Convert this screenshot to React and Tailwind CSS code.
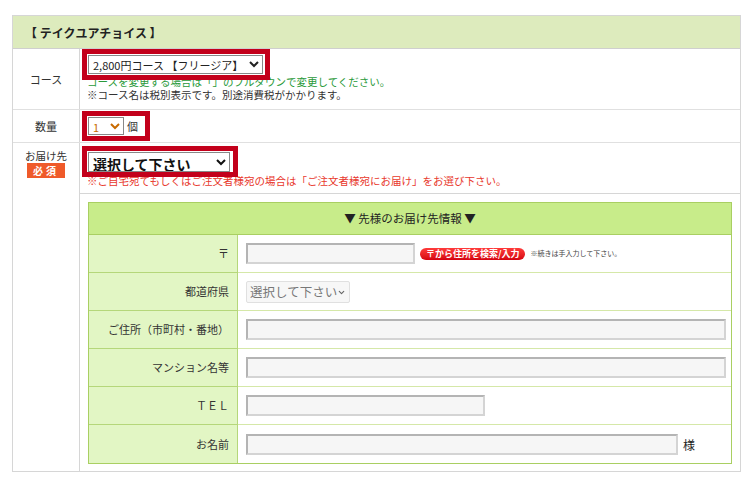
import React from "react";
import { ChevronDown } from "lucide-react";

const font = { fontFamily: '"Noto Sans CJK JP", "Noto Sans", sans-serif' };

// 入力欄の共通スタイル
const inputCls =
  "block h-[21px] bg-[#f6f6f6] border-2 border-t-[#b4b4b4] border-l-[#b4b4b4] border-b-[#d4d4d4] border-r-[#d4d4d4] outline-none";

// 赤枠（ハイライト）
const redBox = "outline-[5px] outline-solid outline-[#c3001b]";

function Row({ label, children, last }) {
  return (
    <div className={`grid grid-cols-[149px_1fr] h-[38px] ${last ? "" : "border-b border-[#d5e8a8]"}`}>
      <div className={`bg-[#e2f6c4] border-r border-[#b5d77a] flex items-center justify-end pr-[8px] text-[11px] leading-[13px] text-[#333] ${last ? "" : "border-b border-b-[#b5d77a] -mb-px"}`}>
        {label}
      </div>
      <div className="flex items-center pl-[8px] gap-[5px]">{children}</div>
    </div>
  );
}

export default function App() {
  return (
    <div className="w-[750px] h-[480px] bg-white pt-[15px] pl-[12px] leading-[13px]" style={font}>
      <div className="w-[729px] border border-[#d6d6d6]">
        {/* ヘッダー */}
        <div className="h-[33px] bg-[#ddebbd] border-b border-[#cfcfcf] flex items-center pl-[12px] text-[12px] font-bold text-[#222]">
          【 テイクユアチョイス 】
        </div>

        {/* コース */}
        <div className="grid grid-cols-[67px_1fr] h-[61px] border-b border-[#e0e0e0]">
          <div className="border-r border-[#d6d6d6] flex items-center justify-center text-[11px] text-[#333]">コース</div>
          <div className="pl-[7px] pt-[5px]">
            <div className={`w-[178px] h-[21px] p-px ${redBox}`}>
              <select className="block w-[175px] h-[19px] bg-white border border-[#888] text-[11px] leading-[13px] text-[#222]">
                <option>2,800円コース 【フリージア】</option>
              </select>
            </div>
            <div className="text-[10.5px] leading-[13px] text-[#2a9a3a]">
              コースを変更する場合は「」のプルダウンで変更してください。
            </div>
            <div className="text-[10.5px] leading-[13px] text-[#333]">
              ※コース名は税別表示です。別途消費税がかかります。
            </div>
          </div>
        </div>

        {/* 数量 */}
        <div className="grid grid-cols-[67px_1fr] h-[33px] border-b border-[#e0e0e0]">
          <div className="border-r border-[#d6d6d6] flex items-center justify-center text-[11px] text-[#333]">数量</div>
          <div className="flex items-center pl-[7px]">
            <div className={`w-[58px] h-[20px] flex items-center gap-[3px] pl-px ${redBox} text-[11px] text-[#333]`}>
              <select className="block w-[36px] h-[18px] bg-white border border-[#888] text-[11px] leading-[13px] text-[#c86a00]">
                <option>1</option>
              </select>
              個
            </div>
          </div>
        </div>

        {/* お届け先 */}
        <div className="grid grid-cols-[67px_1fr]">
          <div className="border-r border-[#d6d6d6] flex flex-col items-center pt-[7px]">
            <div className="text-[10.5px] leading-[12px] text-[#333]">お届け先</div>
            <div className="mt-[1px] w-[38px] h-[15px] bg-[#ef5a2a] text-white text-[10px] font-bold flex items-center justify-center tracking-[3px]">
              必須
            </div>
          </div>
          <div>
            <div className="h-[51px] pl-[7px] pt-[8px] border-b border-[#d6d6d6]">
              <div className={`w-[146px] h-[21px] p-px ${redBox}`}>
                <select className="block w-[142px] h-[20px] bg-white border border-[#888] text-[14px] leading-[16px] font-bold text-[#111]">
                  <option>選択して下さい</option>
                </select>
              </div>
              <div className="mt-[2px] text-[10.5px] leading-[13px] text-[#e8382c]">
                ※ご自宅宛てもしくはご注文者様宛の場合は「ご注文者様宛にお届け」をお選び下さい。
              </div>
            </div>

            {/* 先様のお届け先情報 */}
            <div className="px-[8px] pt-[8px] pb-[7px]">
              <div className="border border-[#a9cf62]">
                <div className="h-[32px] bg-[#c8ec8a] border-b border-[#a9cf62] flex items-center justify-center text-[11.5px] text-[#222]">
                  ▼ 先様のお届け先情報 ▼
                </div>
                <Row label="〒">
                  <input className={`${inputCls} w-[169px]`} />
                  <span className="h-[12px] px-[6px] rounded-full bg-gradient-to-b from-[#ff3a3a] to-[#d5000f] text-white text-[9px] font-bold leading-[12px] whitespace-nowrap">
                    〒から住所を検索/入力
                  </span>
                  <span className="text-[7px] text-[#444]">※続きは手入力して下さい。</span>
                </Row>
                <Row label="都道府県">
                  <div className="relative w-[104px] h-[22px]">
                    <select className="block appearance-none w-full h-full pl-[3px] bg-[#f7f7f7] border border-[#e0e0e0] rounded-[2px] text-[12.5px] leading-[16px] text-[#777]">
                      <option>選択して下さい</option>
                    </select>
                    <ChevronDown size={9} strokeWidth={3} className="absolute right-[4px] top-[7px] text-[#666] pointer-events-none" />
                  </div>
                </Row>
                <Row label="ご住所（市町村・番地）">
                  <input className={`${inputCls} w-[480px]`} />
                </Row>
                <Row label="マンション名等">
                  <input className={`${inputCls} w-[480px]`} />
                </Row>
                <Row label="ＴＥＬ">
                  <input className={`${inputCls} w-[239px]`} />
                </Row>
                <Row label="お名前" last>
                  <input className={`${inputCls} w-[432px]`} />
                  <span className="text-[12px] text-[#222]">様</span>
                </Row>
              </div>
            </div>
          </div>
        </div>
      </div>
    </div>
  );
}
